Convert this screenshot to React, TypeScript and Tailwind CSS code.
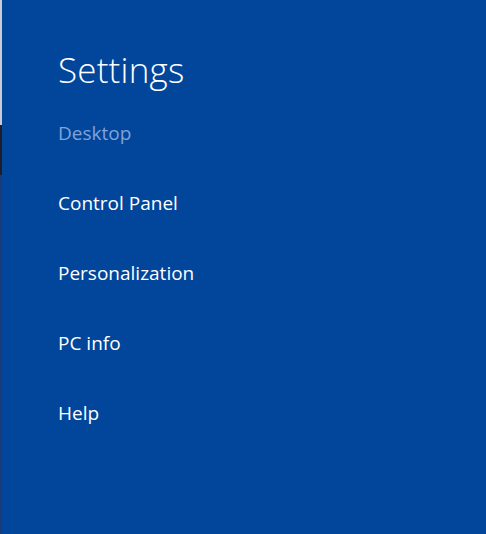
export default function App() {
  const items = ['Control Panel', 'Personalization', 'PC info', 'Help'];

  return (
    <div className="flex h-[534px] w-[486px] overflow-hidden" style={{ fontFamily: '"Open Sans", "Noto Sans", sans-serif' }}>
      {/* sliver of the desktop behind the charm */}
      <div className="flex w-[2px] flex-col">
        <div className="h-[125px] bg-[#c9ccd3]" />
        <div className="h-[50px] bg-[#1b1f2a]" />
        <div className="flex-1 bg-[#1c3a78]" />
      </div>

      <div className="flex-1 bg-[#01469b] pl-[56px] pt-[48px] text-white">
        <h1 className="text-[35px] font-light leading-[44px] tracking-[0.2px]">Settings</h1>
        <ul className="mt-[27px]">
          <li className="h-[70px] text-[19px] leading-[28px] text-[#7fa3d8]">Desktop</li>
          {items.map((item) => (
            <li key={item} className="h-[70px] text-[19px] leading-[28px]">
              {item}
            </li>
          ))}
        </ul>
      </div>
    </div>
  );
}
